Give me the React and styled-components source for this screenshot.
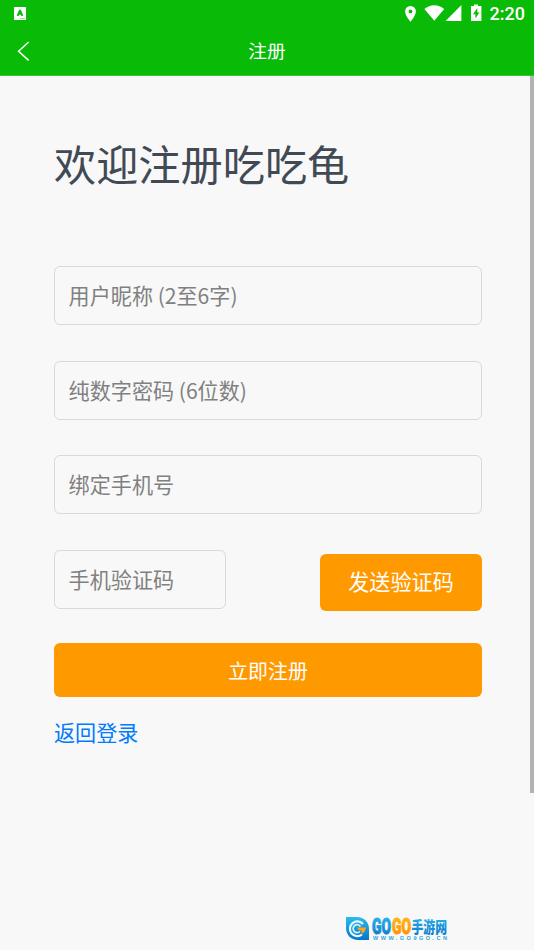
import React, { useState } from "react";
import styled, { createGlobalStyle } from "styled-components";

const GlobalStyle = createGlobalStyle`
  * {
    box-sizing: border-box;
  }
  body {
    margin: 0;
    background-color: #f8f8f8;
    font-family: "Noto Sans CJK SC", sans-serif;
  }
`
const MainContainer = styled.div`
  display: flex;
  flex-direction: column;
  position: relative;
  width: 534px;
  height: 950px;
  overflow: hidden;
  background-color: #f8f8f8;
`
const Header = styled.header`
  height: 76px;
  color: white;
  background-color: #09bb07;
  border-bottom: 1px solid #35c433;
`
const StatusBar = styled.div`
  display: flex;
  justify-content: space-between;
  height: 28px;
`
const StatusIcons = styled.div`
  display: flex;
  padding-right: 9px;
`
const Clock = styled.span`
  width: 36px;
  padding-left: 0.5px;
  font-family: Roboto, sans-serif;
  font-size: 18px;
  font-weight: 500;
  line-height: 28px;
  white-space: nowrap;
`
const NavBar = styled.div`
  display: grid;
  grid-template-columns: 48px 1fr 48px;
  height: 47px;
`
const BackButton = styled.button`
  display: flex;
  padding: 0;
  border: none;
  background: none;
  color: white;
`
const NavTitle = styled.h1`
  margin: 0;
  font-size: 18.7px;
  font-weight: 400;
  line-height: 43px;
  text-align: center;
`
const Form = styled.form`
  display: flex;
  flex-direction: column;
  width: 428px;
  margin-left: 54px;
`
const Title = styled.h2`
  height: 60px;
  margin: 57px 0 73px;
  color: #414a54;
  font-size: 42.2px;
  font-weight: 400;
  line-height: 60px;
  white-space: nowrap;
`
const Fields = styled.div`
  display: flex;
  flex-direction: column;
  gap: 35.7px;
`
const Input = styled.input`
  display: block;
  width: ${({ $width }) => $width || "100%"};
  height: 59px;
  padding: 0 13px 1px 13.6px;
  border: 1.4px solid #d9d9d9;
  border-radius: 6px;
  outline: none;
  background: transparent;
  color: #414a54;
  font-family: inherit;
  font-size: 21.1px;
  &::placeholder {
    color: #808080;
    opacity: 1;
  }
`
const CodeRow = styled.div`
  display: flex;
  justify-content: space-between;
  align-items: flex-start;
`
const Button = styled.button`
  width: ${({ $width }) => $width || "100%"};
  height: ${({ $height }) => $height};
  margin: ${({ $margin }) => $margin || "0"};
  padding: ${({ $padding }) => $padding || "0"};
  border: none;
  border-radius: 6px;
  background-color: #ff9900;
  color: white;
  font-family: inherit;
  font-size: ${({ $fontSize }) => $fontSize};
`
const LoginLink = styled.a`
  margin-top: 20px;
  color: #007aff;
  font-size: 21.1px;
  line-height: 30px;
  text-decoration: none;
`
const ScrollThumb = styled.div`
  position: absolute;
  top: 76px;
  right: 0;
  width: 4px;
  height: 717px;
  background-color: #b3b3b3;
`
const Watermark = styled.svg`
  position: absolute;
  left: 344px;
  top: 912px;
  overflow: visible;
`

const Logo = () => (
  <Watermark width="106" height="32" viewBox="0 -2 106 32">
    <defs>
      <linearGradient id="blue" x1="0" y1="0" x2="0" y2="1">
        <stop offset="0" stopColor="#2bbcee" />
        <stop offset="1" stopColor="#0875c8" />
      </linearGradient>
      <linearGradient id="orange" x1="0" y1="0" x2="0" y2="1">
        <stop offset="0" stopColor="#ffbd13" />
        <stop offset="1" stopColor="#ff8b00" />
      </linearGradient>
    </defs>
    <path d="M2 3H13C20 3 25 8 25 15V26H14C7 26 2 21 2 14Z" fill="url(#blue)" />
    <path d="M19 10A7.4 7.4 0 1 0 18 20.500" fill="none" stroke="#e5faff" strokeWidth="2.2" />
    <path d="M16.500 12.500A4 4 0 1 0 16 17.500" fill="none" stroke="#d4f4ff" strokeWidth="1.7" />
    <path d="M13 13.500H22C21.500 17 20 19 17.500 20L17.500 16.500H15Z" fill="#ffa21a" />
    <g fontFamily="Roboto, sans-serif" fontWeight="900" fontSize="21.5" strokeWidth=".9">
      <text x="28" y="19.500" textLength="19" lengthAdjust="spacingAndGlyphs" fill="url(#blue)" stroke="url(#blue)">GO</text>
      <text x="48" y="19.500" textLength="19" lengthAdjust="spacingAndGlyphs" fill="url(#orange)" stroke="url(#orange)">GO</text>
    </g>
    <text x="67.500" y="18.600" textLength="35.500" lengthAdjust="spacingAndGlyphs" fontFamily="Noto Sans CJK SC, sans-serif" fontWeight="900" fontSize="15.500" fill="url(#blue)">手游网</text>
    <text x="29" y="26" textLength="74" fontFamily="Liberation Sans, sans-serif" fontWeight="700" fontSize="5.500" fill="#2ba5dc">WWW.GO9GO.CN</text>
  </Watermark>
)

const App = () => {
  const [values, setValues] = useState({ name: "", password: "", phone: "", code: "" })

  const bind = (key) => ({
    name: key,
    value: values[key],
    onChange: (e) => setValues({ ...values, [key]: e.target.value }),
  })

  return (
    <MainContainer>
      <GlobalStyle />
      <Header>
        <StatusBar>
          <svg width="40" height="28" viewBox="0 0 40 28">
            <rect x="14" y="7" width="12" height="13" rx="0.6" fill="white" />
            <path d="M17.6 16L20 10.2L22.4 16M18.500 13.800H21.500" fill="none" stroke="#09bb07" strokeWidth="1.9" strokeLinejoin="bevel" />
            <path d="M20 18.5H25" stroke="#09bb07" strokeWidth=".6" strokeDasharray="1.5 .6" />
          </svg>
          <StatusIcons>
            <svg width="89" height="28" viewBox="400 0 89 28" fill="white">
              <path fillRule="evenodd" d="M410.5 6a5.4 5.4 0 0 0-5.4 5.4c0 4.1 5.4 10.3 5.4 10.3s5.4-6.2 5.4-10.3A5.4 5.4 0 0 0 410.5 6Zm0 3.5a1.9 1.9 0 1 1 0 3.8 1.9 1.9 0 0 1 0-3.8Z" />
              <path d="M424.4 9C430 3.9 438.6 3.9 444.2 9L434.3 20.8Z" />
              <path d="M461.4 5V21H445.6Z" />
              <path fillRule="evenodd" d="M474 4.4h4v1.5h3.4V21H471V5.9h3ZM477.3 8L473 14.2h2.4V18.5L479.4 12.4h-2.1Z" />
            </svg>
            <Clock>2:20</Clock>
          </StatusIcons>
        </StatusBar>
        <NavBar>
          <BackButton type="button" aria-label="返回">
            <svg width="48" height="46" viewBox="0 0 48 46">
              <path d="M28.6 14L18.6 23.2L28.6 32.4" fill="none" stroke="white" strokeWidth="1.5" />
            </svg>
          </BackButton>
          <NavTitle>注册</NavTitle>
        </NavBar>
      </Header>
      <Form onSubmit={(e) => e.preventDefault()}>
        <Title>欢迎注册吃吃龟</Title>
        <Fields>
          <Input {...bind("name")} placeholder="用户昵称 (2至6字)" />
          <Input {...bind("password")} type="password" placeholder="纯数字密码 (6位数)" />
          <Input {...bind("phone")} placeholder="绑定手机号" />
          <CodeRow>
            <Input {...bind("code")} $width="172px" placeholder="手机验证码" />
            <Button type="button" $width="162px" $height="57px" $margin="4px 0 0" $padding="0 0 4px" $fontSize="21.1px">发送验证码</Button>
          </CodeRow>
        </Fields>
        <Button type="submit" $height="54px" $margin="32px 0 0" $fontSize="19.9px">立即注册</Button>
        <LoginLink href="#">返回登录</LoginLink>
      </Form>
      <ScrollThumb />
      <Logo />
    </MainContainer>
  )
}

export default App
